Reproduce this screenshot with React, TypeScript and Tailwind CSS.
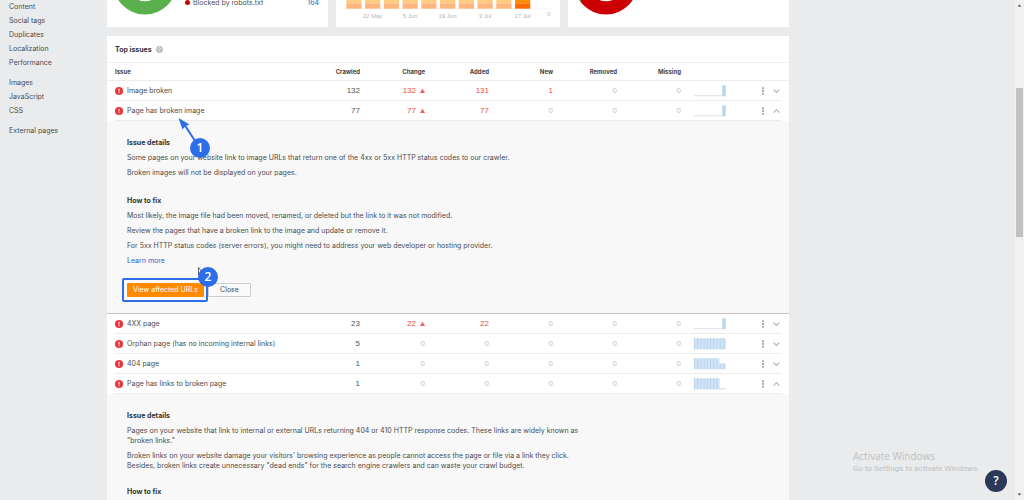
import React from "react";

type Row = {
  name: string;
  values: string[];
  spark: number[];
  open?: boolean;
};

const sidebar: string[][] = [
  ["Content", "Social tags", "Duplicates", "Localization", "Performance"],
  ["Images", "JavaScript", "CSS"],
  ["External pages"],
];

const flat = [0, 0, 0, 0, 0, 0, 0, 0, 0, 11];

const topRows: Row[] = [
  { name: "Image broken", values: ["132", "132", "131", "1", "0", "0"], spark: flat },
  { name: "Page has broken image", values: ["77", "77", "77", "0", "0", "0"], spark: flat, open: true },
];

const bottomRows: Row[] = [
  { name: "4XX page", values: ["23", "22", "22", "0", "0", "0"], spark: flat },
  { name: "Orphan page (has no incoming internal links)", values: ["5", "0", "0", "0", "0", "0"], spark: [11, 11, 11, 11, 11, 11, 11, 11, 11, 11] },
  { name: "404 page", values: ["1", "0", "0", "0", "0", "0"], spark: [11, 11, 11, 11, 11, 11, 11, 11, 6, 6] },
  { name: "Page has links to broken page", values: ["1", "0", "0", "0", "0", "0"], spark: [11, 11, 11, 11, 11, 11, 11, 11, 1, 1], open: true },
];

function Sparkline({ data }: { data: number[] }) {
  const single = data[0] === 0;
  return (
    <svg width="32" height="12" viewBox="0 0 32 12" className="block" aria-hidden="true">
      {single ? (
        <>
          <rect x="0" y="10.4" width="28" height="0.8" fill="#cfdae6" />
          <rect x="28.3" y="0.3" width="3.4" height="11" fill="#b9d4f0" />
        </>
      ) : (
        data.map((v, i) => (
          <g key={i}>
            <rect x={i * 3.2} y={11.3 - v} width="3.2" height={v} fill="#d3e4f6" />
            <rect x={i * 3.2} y={11.3 - v} width="1" height={v} fill="#b4d1ef" />
          </g>
        ))
      )}
    </svg>
  );
}

function valueColor(column: number, value: string) {
  if (column === 0) return "text-[#555]";
  return value === "0" ? "text-[#c4c4c4]" : "text-[#ee4a42]";
}

function IssueRow({ row }: { row: Row }) {
  const line = "border-b border-[#ececec] p-0";
  return (
    <tr className="h-5">
      <td className="p-0" />
      <td className={line}>
        <div className="flex items-center gap-1">
          <svg width="8" height="8" viewBox="0 0 8 8" aria-hidden="true">
            <circle cx="4" cy="4" r="4" fill="#ee3338" />
            <path d="M4 1.8v2.6M4 5.3v1" stroke="#fff" strokeWidth="1.1" />
          </svg>
          <span className="whitespace-nowrap">{row.name}</span>
        </div>
      </td>
      {row.values.map((v, i) => (
        <td key={i} className={`${line} text-right font-['Liberation_Sans',Arial,sans-serif] text-[8px] ${valueColor(i, v)}`}>
          {v}
          {i === 1 && v !== "0" && (
            <svg width="5" height="5" viewBox="0 0 5 5" className="ml-1 inline-block align-baseline" aria-hidden="true">
              <path d="M0 5L2.5 0.4L5 5z" fill="#f0625b" />
            </svg>
          )}
        </td>
      ))}
      <td className={line}>
        <div className="pl-[13px]">
          <Sparkline data={row.spark} />
        </div>
      </td>
      <td className={line}>
        <div className="flex items-center justify-end gap-2 pr-px">
          <button type="button" aria-label={`Actions for ${row.name}`} className="block">
            <svg width="4" height="8" viewBox="0 0 4 8" className="block">
              <path d="M1 0.3h2v1.9H1zM1 3.1h2V5H1zM1 5.9h2v1.9H1z" fill="#aaa" />
            </svg>
          </button>
          <button type="button" aria-expanded={!!row.open} aria-label={`Toggle ${row.name}`} className="block">
            <svg width="7" height="6" viewBox="0 0 7 6" className="block">
              <path d={row.open ? "M0.6 4.6L3.5 1.7L6.4 4.6" : "M0.6 1.6L3.5 4.5L6.4 1.6"} fill="none" stroke="#b0b0b0" strokeWidth="1.1" />
            </svg>
          </button>
        </div>
      </td>
      <td className="p-0" />
    </tr>
  );
}

function Badge({ children }: { children: React.ReactNode }) {
  return (
    <span className="flex size-5 items-center justify-center rounded-full bg-[#2d6ee8] font-['Open_Sans',sans-serif] text-[12px] leading-none font-semibold text-white">
      {children}
    </span>
  );
}

function Donut({ color }: { color: string }) {
  return (
    <svg width="64" height="15" viewBox="0 0 64 15" className="block" aria-hidden="true">
      <circle cx="32" cy="-17" r="24.9" fill="none" stroke={color} strokeWidth="13.4" />
      {color === "#cc0000" && <path d="M5.2 0h2l-.6 1.4z" fill="#5ab04c" />}
    </svg>
  );
}

function CrawlChart() {
  const labels = ["22 May", "5 Jun", "19 Jun", "3 Jul", "17 Jul"];
  return (
    <svg viewBox="0 0 224 27" className="block w-full font-['Liberation_Sans',Arial,sans-serif]" role="img" aria-label="Crawled pages over time">
      <path d="M8 8.6H215" stroke="#eee" strokeWidth="0.8" strokeDasharray="1.5 1" />
      {Array.from({ length: 10 }, (_, i) => (
        <g key={i}>
          <rect x={10.3 + i * 18.75} y="0" width="15.2" height="3.4" fill={i === 9 ? "#ff8c00" : "#ffcb80"} />
          <rect x={10.3 + i * 18.75} y="3.4" width="15.2" height="5.3" fill={i === 9 ? "#ff6a00" : "#ffb57c"} />
        </g>
      ))}
      {labels.map((label, i) => (
        <text key={label} x={36.5 + i * 37.5} y="18" textAnchor="middle" fontSize="6" fill="#b4b4b4">
          {label}
        </text>
      ))}
      <text x="213" y="16" textAnchor="middle" fontSize="6" fill="#b4b4b4">0</text>
    </svg>
  );
}

const headings = ["Crawled", "Change", "Added", "New", "Removed", "Missing"];

export default function App() {
  return (
    <div className="flex h-screen overflow-hidden bg-[#e9ebed] font-['Inter',Arial,sans-serif] text-[7px] leading-[15px] text-[#4c4c4c]">
      <nav className="flex w-[107px] shrink-0 flex-col gap-1.5 pl-[9px] leading-[14px]" aria-label="Reports">
        {sidebar.map((group) => (
          <ul key={group[0]}>
            {group.map((item) => (
              <li key={item}>
                <a href="#">{item}</a>
              </li>
            ))}
          </ul>
        ))}
      </nav>

      <main className="max-w-[682px] flex-1">
        <div className="mb-[9px] grid grid-cols-[221fr_224fr_221fr] gap-2">
          <section className="flex h-[27px] gap-2 bg-white pr-2 pl-1.5">
            <Donut color="#5ab04c" />
            <div className="-mt-[5px] flex flex-1 items-start justify-between pr-px">
              <span className="flex items-center gap-[3px] whitespace-nowrap">
                <span className="size-[5px] rounded-full bg-[#cc0000]" />
                Blocked by robots.txt
              </span>
              <a href="#" className="text-[#2666c4]">164</a>
            </div>
          </section>
          <section className="h-[27px] bg-white">
            <CrawlChart />
          </section>
          <section className="h-[27px] bg-white pl-1.5">
            <Donut color="#cc0000" />
          </section>
        </div>

        <section className="bg-white">
          <h2 className="flex h-[26px] items-center gap-1 pl-2 font-bold text-[#333]">
            Top issues
            <svg width="7" height="7" viewBox="0 0 7 7" aria-hidden="true">
              <circle cx="3.5" cy="3.5" r="3.4" fill="#bdbdbd" />
              <path d="M2.3 2.7Q2.4 1.6 3.5 1.6T4.7 2.6Q4.7 3.1 3.5 3.8V4.3M3.5 4.9v.8" fill="none" stroke="#fff" strokeWidth="0.7" />
            </svg>
          </h2>
          <table className="w-full table-fixed border-separate border-spacing-0">
            <colgroup>
              <col className="w-2" />
              <col />
              <col className="w-[65px]" />
              <col className="w-[65px]" />
              <col className="w-16" />
              <col className="w-16" />
              <col className="w-16" />
              <col className="w-16" />
              <col className="w-[60px]" />
              <col className="w-10" />
              <col className="w-2" />
            </colgroup>
            <thead>
              <tr className="h-[19px] text-[6px] text-[#444]">
                <td className="border-y border-[#ececec] p-0" />
                <th className="border-y border-[#ececec] p-0 text-left">Issue</th>
                {headings.map((h) => (
                  <th key={h} className="border-y border-[#ececec] p-0 text-right">{h}</th>
                ))}
                <td className="border-y border-[#ececec] p-0" />
                <td className="border-y border-[#ececec] p-0" />
                <td className="border-y border-[#ececec] p-0" />
              </tr>
            </thead>
            <tbody>
              {topRows.map((row) => <IssueRow key={row.name} row={row} />)}
              <tr>
                <td colSpan={11} className="border-b border-[#c4c4c4] bg-[#f8f8f8] p-0">
                  <div className="relative pt-3.5 pb-4 pl-5">
                    <h3 className="font-bold text-[#333]">Issue details</h3>
                    <p>Some pages on your website link to image URLs that return one of the 4xx or 5xx HTTP status codes to our crawler.</p>
                    <p>Broken images will not be displayed on your pages.</p>
                    <h3 className="mt-[13px] font-bold text-[#333]">How to fix</h3>
                    <p>Most likely, the image file had been moved, renamed, or deleted but the link to it was not modified.</p>
                    <p>Review the pages that have a broken link to the image and update or remove it.</p>
                    <p>For 5xx HTTP status codes (server errors), you might need to address your web developer or hosting provider.</p>
                    <a href="#" className="block w-fit text-[#2666c4]">Learn more</a>
                    <div className="mt-[15px] flex gap-1">
                      <button type="button" className="h-3.5 w-[77px] rounded-[1px] bg-[#ff8a00] leading-[14px] whitespace-nowrap text-white">View affected URLs</button>
                      <button type="button" className="h-3.5 w-[43px] rounded-[1px] border border-[#ccc] bg-[#fafafa] leading-[12px]">Close</button>
                    </div>

                    <svg width="30" height="34" viewBox="0 0 30 34" className="absolute -top-1 left-[70px]" aria-hidden="true">
                      <path d="M7 7L22 30" stroke="#2d6ee8" strokeWidth="2" />
                      <path d="M1.5 1L12.5 7.5L8.5 9L5.5 12.5z" fill="#2d6ee8" />
                    </svg>
                    <div className="absolute top-[17px] left-[83px]"><Badge>1</Badge></div>
                    <div className="absolute bottom-[11px] left-[15px] h-6 w-[86px] rounded-[2px] border-2 border-[#2d6ee8]" />
                    <svg width="6" height="9" viewBox="0 0 6 9" className="absolute bottom-[37px] left-[91px]" aria-hidden="true">
                      <path d="M.5 .5V8L2.3 6.2H5z" fill="#fff" stroke="#444" strokeWidth="0.8" />
                    </svg>
                    <div className="absolute bottom-[26px] left-[91px]"><Badge>2</Badge></div>
                  </div>
                </td>
              </tr>
              {bottomRows.map((row) => <IssueRow key={row.name} row={row} />)}
              <tr>
                <td colSpan={11} className="bg-[#f8f8f8] p-0">
                  <div className="pt-3.5 pb-4 pl-5">
                    <h3 className="font-bold text-[#333]">Issue details</h3>
                    <p className="mt-[3px] leading-[10px]">
                      Pages on your website that link to internal or external URLs returning 404 or 410 HTTP response codes. These links are widely known as<br />
                      "broken links."
                    </p>
                    <p className="mt-[5px] leading-[10px]">
                      Broken links on your website damage your visitors' browsing experience as people cannot access the page or file via a link they click.<br />
                      Besides, broken links create unnecessary "dead ends" for the search engine crawlers and can waste your crawl budget.
                    </p>
                    <h3 className="mt-[13px] font-bold text-[#333]">How to fix</h3>
                  </div>
                </td>
              </tr>
            </tbody>
          </table>
        </section>
      </main>

      <aside className="ml-auto flex flex-col items-end justify-end pr-2 pb-2">
        <div className="mr-2 w-[146px] whitespace-nowrap text-[#bfc1c3]">
          <p className="font-['Open_Sans',sans-serif] text-[10px] leading-[13px]">Activate Windows</p>
          <p className="font-['Roboto',sans-serif] text-[8px] leading-[11px]">Go to Settings to activate Windows.</p>
        </div>
        <button type="button" aria-label="Help" className="-mt-1 flex size-[22px] items-center justify-center rounded-full bg-[#2b3856] font-['Open_Sans',sans-serif] text-[12px] leading-none font-semibold text-white">?</button>
      </aside>

      <div className="flex w-[9px] shrink-0 flex-col items-center justify-between bg-[#f1f1f1] py-1" aria-hidden="true">
        <svg width="5" height="3" viewBox="0 0 5 3"><path d="M.5 2.5L2.5 .4L4.5 2.5z" fill="#505050" /></svg>
        <div className="mb-[176px] h-[149px] w-[7px] bg-[#c1c1c1]" />
        <svg width="5" height="3" viewBox="0 0 5 3"><path d="M.5 .5L2.5 2.6L4.5 .5z" fill="#505050" /></svg>
      </div>
    </div>
  );
}
